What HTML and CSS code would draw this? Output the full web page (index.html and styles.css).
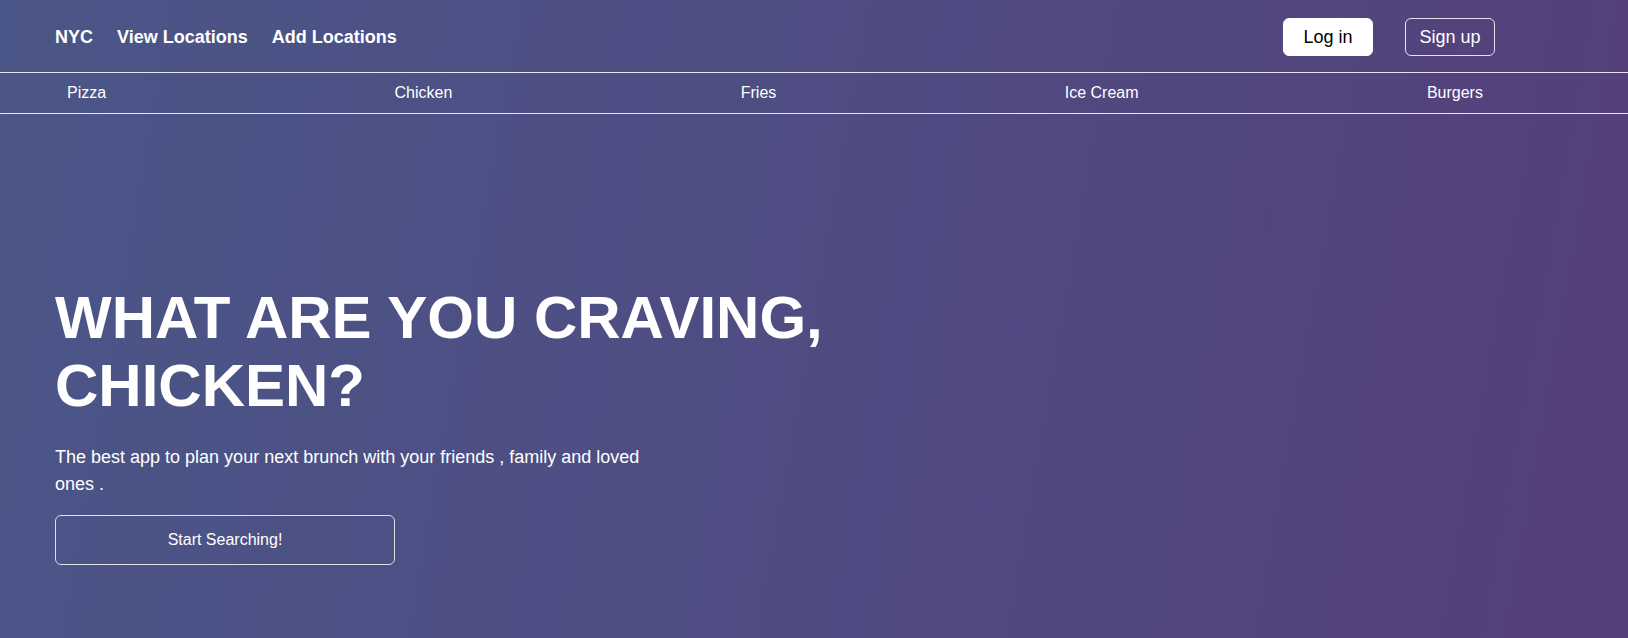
FILE: index.html
```
<!DOCTYPE html>
<html lang="en">
<head>
<meta charset="utf-8">
<title>NYC Craving</title>
<link rel="stylesheet" href="styles.css">
</head>
<body>
<div class="page">
  <header class="topbar">
    <nav class="main-nav">
      <a class="nav-link" href="#">NYC</a>
      <a class="nav-link" href="#">View Locations</a>
      <a class="nav-link" href="#">Add Locations</a>
    </nav>
    <div class="auth">
      <button class="btn btn-login">Log in</button>
      <button class="btn btn-signup">Sign up</button>
    </div>
  </header>
  <nav class="categories">
    <a class="cat" href="#">Pizza</a>
    <a class="cat" href="#">Chicken</a>
    <a class="cat" href="#">Fries</a>
    <a class="cat" href="#">Ice Cream</a>
    <a class="cat" href="#">Burgers</a>
  </nav>
  <main class="hero">
    <h1 class="hero-title">WHAT ARE YOU CRAVING, CHICKEN?</h1>
    <p class="hero-text">The best app to plan your next brunch with your friends , family and loved ones .</p>
    <button class="btn-search">Start Searching!</button>
  </main>
</div>
</body>
</html>
```
FILE: styles.css
```
* { box-sizing: border-box; }
html, body { margin: 0; padding: 0; height: 100%; }
body {
  font-family: "Liberation Sans", Arial, Helvetica, sans-serif;
  color: #fff;
  background: linear-gradient(100deg, #4a5687 0%, #4f4c82 50%, #553e79 100%);
  min-height: 638px;
}
.page { min-height: 638px; }
.topbar {
  height: 73px;
  display: flex;
  align-items: center;
  justify-content: space-between;
  padding: 2px 133px 0 55px;
  border-bottom: 1px solid rgba(255,255,255,0.85);
}
.main-nav { display: flex; gap: 24px; align-items: center; }
.nav-link {
  color: #fff;
  text-decoration: none;
  font-weight: bold;
  font-size: 18px;
}
.auth { display: flex; gap: 32px; align-items: center; }
.btn {
  width: 90px;
  height: 38px;
  border-radius: 6px;
  font-family: inherit;
  font-size: 18px;
  cursor: pointer;
}
.btn-login { background: #fff; color: #000; border: 1px solid #fff; }
.btn-signup { background: transparent; color: #fff; border: 1px solid rgba(255,255,255,0.85); }
.categories {
  height: 41px;
  display: flex;
  align-items: center;
  justify-content: space-between;
  padding: 0 145px 0 67px;
  border-bottom: 1px solid rgba(255,255,255,0.85);
}
.cat { color: #fff; text-decoration: none; font-size: 16px; }
.hero { padding: 170px 0 0 55px; }
.hero-title {
  margin: 0;
  max-width: 800px;
  font-size: 60px;
  line-height: 67.5px;
  font-weight: bold;
}
.hero-text {
  margin: 25px 0 0;
  max-width: 600px;
  font-size: 18px;
  line-height: 27px;
}
.btn-search {
  margin-top: 17px;
  width: 340px;
  height: 50px;
  background: transparent;
  color: #fff;
  border: 1px solid rgba(255,255,255,0.8);
  border-radius: 6px;
  font-family: inherit;
  font-size: 16px;
  cursor: pointer;
}
```
